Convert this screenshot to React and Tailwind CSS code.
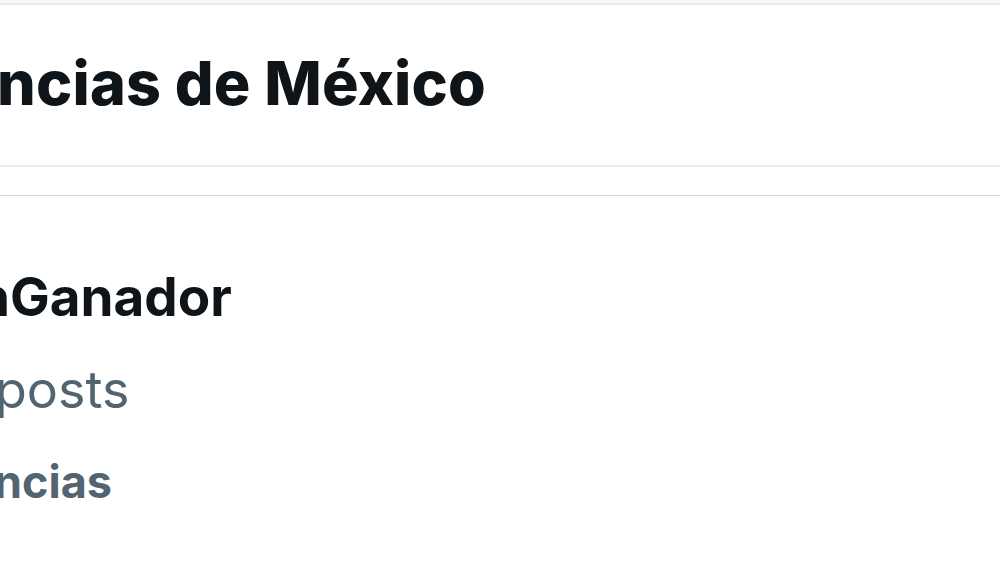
import { useLayoutEffect, useRef, useState } from 'react'

// shows the end of a text; the hidden start is slid past the left edge
function Cut({ prefix, rest, offset, className }) {
  const ref = useRef(null)
  const [w, setW] = useState(0)
  useLayoutEffect(() => {
    setW(ref.current.getBoundingClientRect().width)
  }, [])
  return (
    <p className={'whitespace-nowrap leading-none ' + className} style={{ marginLeft: offset - w }}>
      <span ref={ref}>{prefix}</span>
      {rest}
    </p>
  )
}

export default function App() {
  return (
    <div className="w-[1000px] h-[563px] overflow-hidden bg-white font-[Inter,sans-serif]">
      <div className="h-[3px] bg-[#f5f7f8]" />
      <div className="h-[2px] bg-[#e6e9eb]" />

      <div className="h-[160px] pt-[48px]">
        <Cut prefix="Tende" rest="ncias de México" offset={-3} className="text-[61px] font-extrabold tracking-[0.2px] text-[#0f1419]" />
      </div>
      <div className="h-[2px] bg-[#e9ebec]" />
      <div className="h-[28px]" />
      <div className="h-px bg-[#d3d6d8]" />

      <div className="pt-[75px]">
        <Cut prefix="#Un" rest="Ganador" offset={10} className="text-[53px] font-bold text-[#0f1419]" />
        <Cut prefix="12,3 mil " rest="posts" offset={-5} className="mt-[40px] text-[52px] text-[#536471]" />
        <Cut prefix="Tende" rest="ncias" offset={-6} className="mt-[43px] text-[45px] font-bold text-[#536471]" />
      </div>
    </div>
  )
}
